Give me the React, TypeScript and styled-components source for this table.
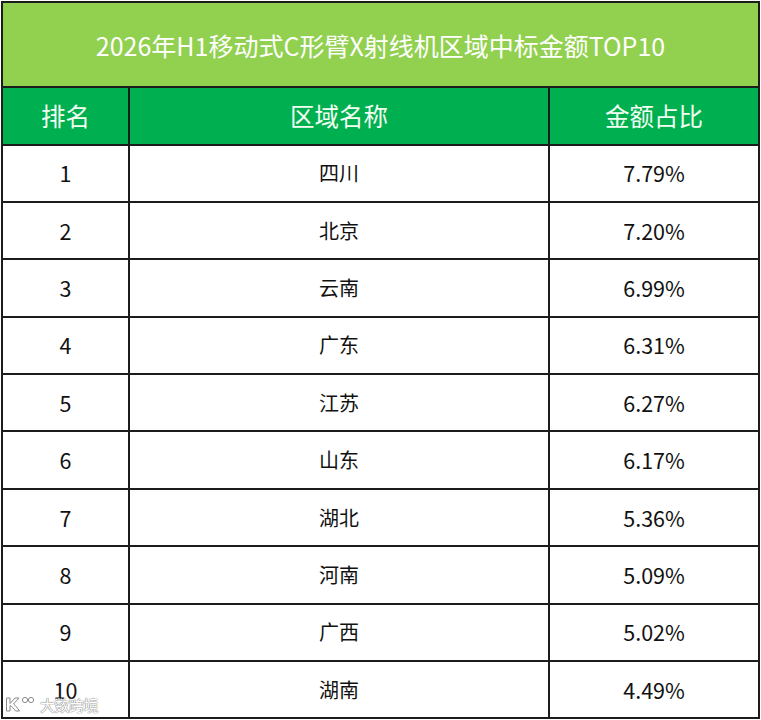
import { createGlobalStyle } from 'styled-components'
import styled from 'styled-components'

const GlobalStyle = createGlobalStyle`
  html, body {
    margin: 0;
    padding: 0;
    background: #ffffff;
  }
  body {
    font-family: 'Noto Sans CJK SC', 'Noto Sans', sans-serif;
  }
`

const Page = styled.div`
  position: relative;
  width: 761px;
  height: 720px;
  padding: 1px 0 0 1px;
  box-sizing: border-box;
  overflow: hidden;
`

const Table = styled.table`
  width: 757px;
  border-collapse: collapse;
  table-layout: fixed;
  border: 2px solid #1c1c1c;
`

const TitleCell = styled.th`
  height: 83px;
  padding: 0;
  background: #92d050;
  color: #ffffff;
  font-size: 25px;
  font-weight: 400;
  line-height: 1.2;
  text-align: center;
  vertical-align: middle;
  border: 2px solid #1c1c1c;
`

const HeadCell = styled.th`
  height: 55.5px;
  padding: 0;
  background: #00b050;
  color: #f2fff2;
  font-size: 24.5px;
  font-weight: 400;
  line-height: 1.2;
  text-align: center;
  vertical-align: middle;
  border: 2px solid #1c1c1c;
`

const Cell = styled.td<{ $num?: boolean }>`
  height: 55.4px;
  padding: 0;
  color: #111111;
  font-size: ${(p) => (p.$num ? '21.5px' : '20px')};
  line-height: 1.2;
  text-align: center;
  vertical-align: middle;
  border: 2px solid #1c1c1c;
`

const Watermark = styled.div`
  position: absolute;
  left: 5px;
  bottom: 7px;
  display: flex;
  align-items: center;
  gap: 3px;
  pointer-events: none;
`

const MarkText = styled.span`
  font-size: 15px;
  line-height: 1;
  color: #ffffff;
  letter-spacing: -0.5px;
  text-shadow: 0 0 1px #8a8a8a, 0 0 1px #8a8a8a, 0 0 1px #8a8a8a;
`

interface IRow {
  rank: number
  region: string
  share: string
}

const rows: IRow[] = [
  { rank: 1, region: '四川', share: '7.79%' },
  { rank: 2, region: '北京', share: '7.20%' },
  { rank: 3, region: '云南', share: '6.99%' },
  { rank: 4, region: '广东', share: '6.31%' },
  { rank: 5, region: '江苏', share: '6.27%' },
  { rank: 6, region: '山东', share: '6.17%' },
  { rank: 7, region: '湖北', share: '5.36%' },
  { rank: 8, region: '河南', share: '5.09%' },
  { rank: 9, region: '广西', share: '5.02%' },
  { rank: 10, region: '湖南', share: '4.49%' },
]

const LogoMark = () => (
  <svg width="32" height="17" viewBox="0 0 32 17">
    <g fill="#ffffff" stroke="#8a8a8a" strokeWidth="1">
      <path d="M1.5 2 h3.5 v5.5 l5 -5.5 h4 l-5.5 6 c2 1.5 4 4 6 7 h-4 c-1.5 -2.5 -3.5 -4.5 -5.5 -5.5 v5.5 h-3.5 z" />
      <circle cx="20" cy="4" r="2.6" />
      <circle cx="26" cy="4" r="2.6" />
    </g>
  </svg>
)

const App = () => {
  return (
    <Page>
      <GlobalStyle />
      <Table>
        <colgroup>
          <col style={{ width: '127px' }} />
          <col style={{ width: '420px' }} />
          <col style={{ width: '210px' }} />
        </colgroup>
        <thead>
          <tr>
            <TitleCell colSpan={3}>2026年H1移动式C形臂X射线机区域中标金额TOP10</TitleCell>
          </tr>
          <tr>
            <HeadCell>排名</HeadCell>
            <HeadCell>区域名称</HeadCell>
            <HeadCell>金额占比</HeadCell>
          </tr>
        </thead>
        <tbody>
          {rows.map((row) => (
            <tr key={row.rank}>
              <Cell $num>{row.rank}</Cell>
              <Cell>{row.region}</Cell>
              <Cell $num>{row.share}</Cell>
            </tr>
          ))}
        </tbody>
      </Table>
      <Watermark>
        <LogoMark />
        <MarkText>大数跨境</MarkText>
      </Watermark>
    </Page>
  )
}

export default App
